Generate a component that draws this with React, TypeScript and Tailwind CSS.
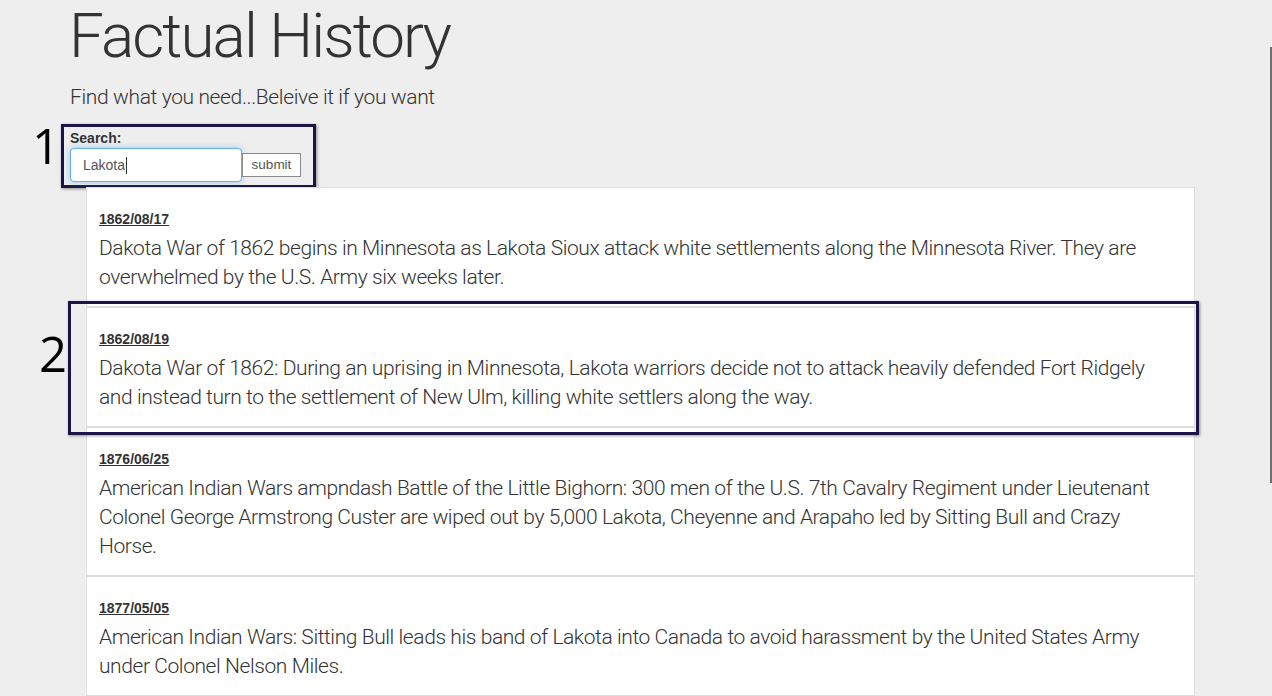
const events = [
  {
    date: '1862/08/17',
    text: 'Dakota War of 1862 begins in Minnesota as Lakota Sioux attack white settlements along the Minnesota River. They are overwhelmed by the U.S. Army six weeks later.',
  },
  {
    date: '1862/08/19',
    text: 'Dakota War of 1862: During an uprising in Minnesota, Lakota warriors decide not to attack heavily defended Fort Ridgely and instead turn to the settlement of New Ulm, killing white settlers along the way.',
  },
  {
    date: '1876/06/25',
    text: 'American Indian Wars ampndash Battle of the Little Bighorn: 300 men of the U.S. 7th Cavalry Regiment under Lieutenant Colonel George Armstrong Custer are wiped out by 5,000 Lakota, Cheyenne and Arapaho led by Sitting Bull and Crazy Horse.',
  },
  {
    date: '1877/05/05',
    text: 'American Indian Wars: Sitting Bull leads his band of Lakota into Canada to avoid harassment by the United States Army under Colonel Nelson Miles.',
  },
]

const EventCard = ({ date, text }: { date: string; text: string }) => {
  return (
    <div className='bg-white border border-[#dedede] pl-[12px] pr-[24px] pt-[21px] pb-[13px]'>
      <a href='#' className="block h-[20px] leading-[20px] text-[14px] font-bold text-[#333] underline font-['Liberation_Sans',Arial,sans-serif]">
        {date}
      </a>
      <p className="mt-[5px] text-[21px] leading-[1.4] font-light tracking-[-0.42px] text-[#333] font-['Roboto',sans-serif]">{text}</p>
    </div>
  )
}

export default function App() {
  return (
    <div className='relative min-h-[696px] w-full overflow-hidden bg-[#eeeeee]'>
      <div className='pl-[70px]'>
        <h1 className="-ml-[1px] pt-[5px] text-[62px] leading-none font-light tracking-[-1.9px] text-[#333] font-['Roboto',sans-serif]">
          Factual History
        </h1>
        <p className="mt-[20px] text-[21px] leading-none font-light tracking-[-0.37px] text-[#333] font-['Roboto',sans-serif]">
          Find what you need...Beleive it if you want
        </p>
        <form
          className="-ml-[9px] mt-[16px] h-[64px] w-[255px] border-[3px] border-[#1b1444] pl-[6px] pt-[4px] shadow-[1px_1px_3px_rgba(0,0,0,0.4)] font-['Liberation_Sans',Arial,sans-serif]"
          onSubmit={(e) => e.preventDefault()}
        >
          <label className='block text-[14px] leading-none font-bold text-[#333]'>Search:</label>
          <div className='mt-[3px] flex items-center'>
            <div className='flex h-[34px] w-[172px] items-center rounded-[4px] border border-[#66afe9] bg-white pl-[12px] text-[14px] text-[#555] shadow-[0_0_6px_rgba(102,175,233,0.6)]'>
              Lakota<span className='ml-px inline-block h-[17px] w-px bg-[#333]' />
            </div>
            <button type='submit' className='h-[24px] w-[59px] border border-[#8a8a8a] bg-white text-[13.5px] text-[#555]'>
              submit
            </button>
          </div>
        </form>
      </div>

      <div className='relative -mt-px ml-[86px] w-[1109px]'>
        {events.map((ev) => (
          <EventCard key={ev.date} date={ev.date} text={ev.text} />
        ))}
      </div>

      {/* annotation overlays */}
      <div className='absolute left-[68px] top-[301px] h-[134px] w-[1131px] border-[3px] border-[#1b1444] shadow-[1px_1px_3px_rgba(0,0,0,0.4)]' />
      <span className="absolute left-[32px] top-[121px] text-[49px] leading-none text-black font-['Open_Sans',sans-serif]">1</span>
      <span className="absolute left-[39px] top-[329px] text-[49px] leading-none text-black font-['Open_Sans',sans-serif]">2</span>
      <div className='absolute right-0 top-[47px] h-[436px] w-[2px] bg-[#707070]' />
    </div>
  )
}
